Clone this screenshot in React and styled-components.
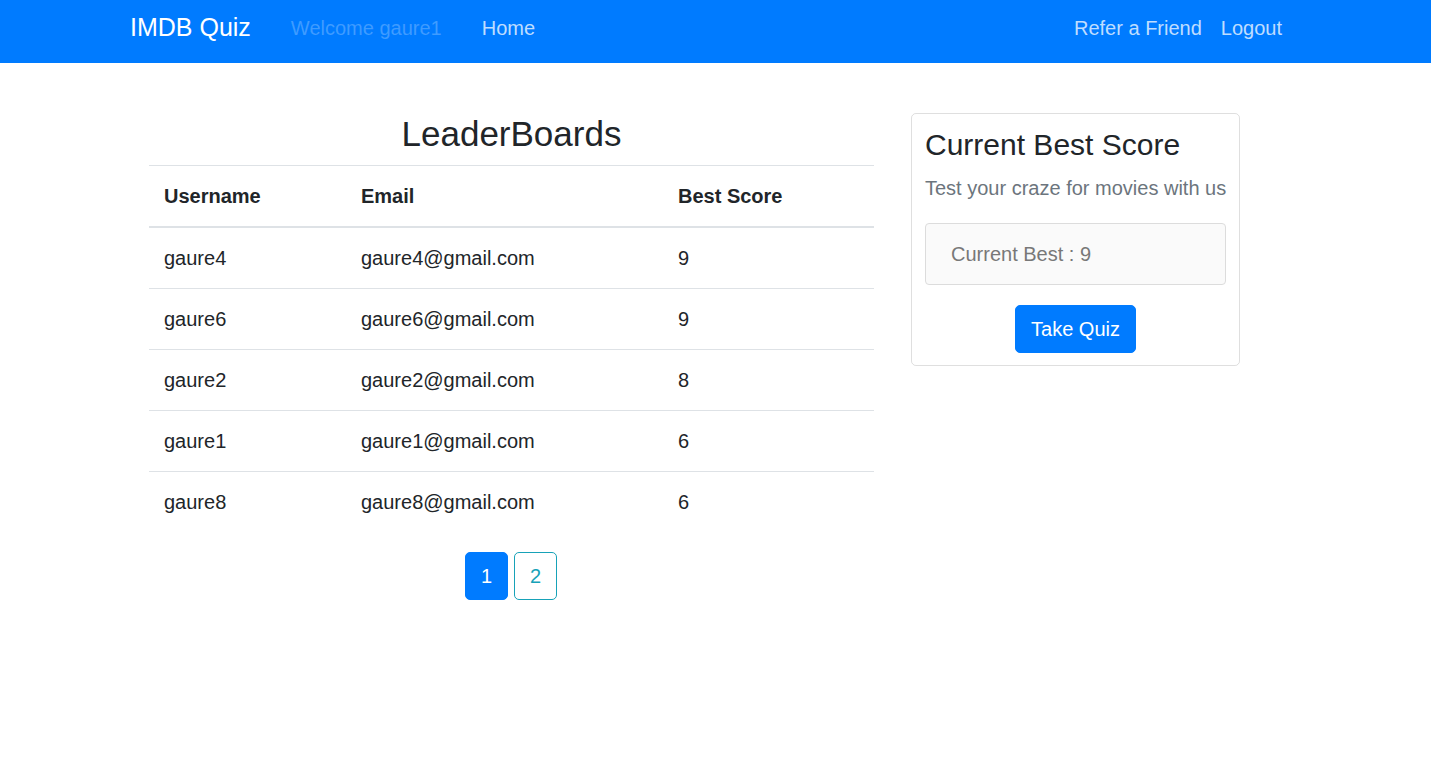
import React from "react";
import styled, { createGlobalStyle } from "styled-components";

const Global = createGlobalStyle`
  * { box-sizing: border-box; }
  html, body { margin: 0; padding: 0; }
  body {
    font-family: "Liberation Sans", Arial, sans-serif;
    font-size: 20px;
    line-height: 1.5;
    color: #212529;
    background: #fff;
  }
`;

const NavBar = styled.nav`
  height: 63px;
  background: #007bff;
  padding: 0 139px 8px 130px;
  display: flex;
  align-items: center;
`;

const Brand = styled.a`
  font-size: 25px;
  line-height: 37.5px;
  color: #fff;
  text-decoration: none;
  margin-right: 30px;
`;

const NavGroup = styled.div`
  display: flex;
  align-items: center;
  margin-left: ${(p) => (p.$right ? "auto" : "0")};
`;

const NavLink = styled.a`
  font-size: 20px;
  line-height: 30px;
  padding: 8px 10px;
  text-decoration: none;
  color: ${(p) => (p.$muted ? "rgba(255,255,255,0.25)" : "rgba(255,255,255,0.75)")};
  margin-right: ${(p) => p.$mr || "0px"};
`;

const Main = styled.main`
  display: flex;
  align-items: flex-start;
  padding: 50px 0 0 149px;
  gap: 37px;
`;

const BoardColumn = styled.section`
  width: 725px;
  display: flex;
  flex-direction: column;
  align-items: center;
`;

const Title = styled.h3`
  margin: 0 0 10px;
  font-size: 35px;
  font-weight: 400;
  line-height: 1.2;
  color: #212529;
`;

const Table = styled.table`
  width: 100%;
  border-collapse: collapse;
  margin-bottom: 20px;
`;

const Th = styled.th`
  text-align: left;
  font-weight: 700;
  padding: 15px;
  line-height: 30px;
  border-top: 1px solid #dee2e6;
  border-bottom: 2px solid #dee2e6;
  width: ${(p) => p.$w};
`;

const Td = styled.td`
  padding: 15px;
  line-height: 30px;
  border-top: ${(p) => (p.$first ? "none" : "1px solid #dee2e6")};
`;

const Pager = styled.div`
  display: flex;
  gap: 6px;
  margin-right: 1px;
`;

const PageButton = styled.button`
  font-family: inherit;
  font-size: 20px;
  line-height: 30px;
  width: 43px;
  padding: 8px 0;
  text-align: center;
  border-radius: 5px;
  border: 1px solid ${(p) => (p.$active ? "#007bff" : "#17a2b8")};
  background: ${(p) => (p.$active ? "#007bff" : "#fff")};
  color: ${(p) => (p.$active ? "#fff" : "#17a2b8")};
  cursor: pointer;
`;

const Card = styled.aside`
  width: 329px;
  border: 1px solid rgba(0, 0, 0, 0.125);
  border-radius: 5px;
  padding: 13px 13px 12px;
  display: flex;
  flex-direction: column;
  align-items: center;
`;

const CardTitle = styled.h4`
  align-self: stretch;
  margin: 0 0 9.5px;
  font-size: 30px;
  font-weight: 400;
  line-height: 1.2;
  color: #212529;
  white-space: nowrap;
`;

const CardSubtitle = styled.h6`
  align-self: stretch;
  margin: 0 0 20px;
  font-size: 20px;
  font-weight: 400;
  line-height: 30px;
  color: #6c757d;
  white-space: nowrap;
`;

const BestBox = styled.div`
  align-self: stretch;
  background: #fafafa;
  border: 1px solid #dcdcdc;
  border-radius: 4px;
  padding: 15px 25px;
  line-height: 30px;
  color: #787878;
  margin-bottom: 20px;
`;

const QuizButton = styled.button`
  font-family: inherit;
  font-size: 20px;
  line-height: 30px;
  padding: 8px 15px;
  border-radius: 5px;
  border: 1px solid #007bff;
  background: #007bff;
  color: #fff;
  cursor: pointer;
`;

const rows = [
  ["gaure4", "gaure4@gmail.com", 9],
  ["gaure6", "gaure6@gmail.com", 9],
  ["gaure2", "gaure2@gmail.com", 8],
  ["gaure1", "gaure1@gmail.com", 6],
  ["gaure8", "gaure8@gmail.com", 6],
];

export default function App() {
  return (
    <>
      <Global />
      <NavBar>
        <Brand href="#">IMDB Quiz</Brand>
        <NavGroup>
          <NavLink $muted $mr="20px">Welcome gaure1</NavLink>
          <NavLink href="#">Home</NavLink>
        </NavGroup>
        <NavGroup $right>
          <NavLink href="#" $mr="-1px">Refer a Friend</NavLink>
          <NavLink href="#">Logout</NavLink>
        </NavGroup>
      </NavBar>
      <Main>
        <BoardColumn>
          <Title>LeaderBoards</Title>
          <Table>
            <thead>
              <tr>
                <Th $w="197px">Username</Th>
                <Th $w="317px">Email</Th>
                <Th $w="211px">Best Score</Th>
              </tr>
            </thead>
            <tbody>
              {rows.map((r, i) => (
                <tr key={r[0]}>
                  <Td $first={i === 0}>{r[0]}</Td>
                  <Td $first={i === 0}>{r[1]}</Td>
                  <Td $first={i === 0}>{r[2]}</Td>
                </tr>
              ))}
            </tbody>
          </Table>
          <Pager>
            <PageButton $active>1</PageButton>
            <PageButton>2</PageButton>
          </Pager>
        </BoardColumn>
        <Card>
          <CardTitle>Current Best Score</CardTitle>
          <CardSubtitle>Test your craze for movies with us</CardSubtitle>
          <BestBox>Current Best : 9</BestBox>
          <QuizButton>Take Quiz</QuizButton>
        </Card>
      </Main>
    </>
  );
}
